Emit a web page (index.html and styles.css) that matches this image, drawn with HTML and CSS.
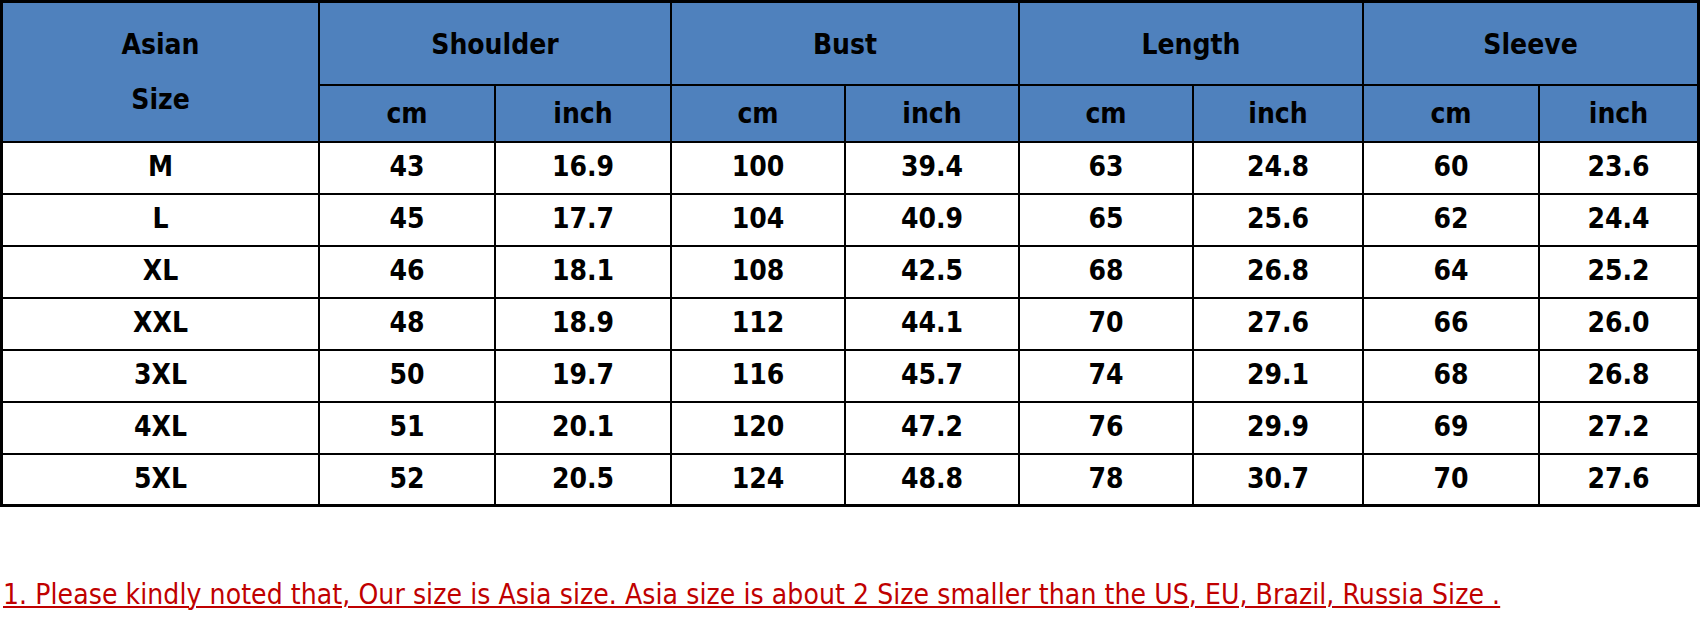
FILE: index.html
```html
<!DOCTYPE html>
<html lang="en">
<head>
<meta charset="utf-8">
<title>Size Chart</title>
<link rel="stylesheet" href="styles.css">
</head>
<body>
<div class="sizes" role="table" aria-label="Size chart">
  <div class="cell head size-head" role="columnheader">Asian<br>Size</div>
  <div class="cell head group" role="columnheader">Shoulder</div>
  <div class="cell head group" role="columnheader">Bust</div>
  <div class="cell head group" role="columnheader">Length</div>
  <div class="cell head group" role="columnheader">Sleeve</div>
  <div class="cell head unit">cm</div><div class="cell head unit">inch</div>
  <div class="cell head unit">cm</div><div class="cell head unit">inch</div>
  <div class="cell head unit">cm</div><div class="cell head unit">inch</div>
  <div class="cell head unit">cm</div><div class="cell head unit">inch</div>

  <div class="cell">M</div><div class="cell">43</div><div class="cell">16.9</div><div class="cell">100</div><div class="cell">39.4</div><div class="cell">63</div><div class="cell">24.8</div><div class="cell">60</div><div class="cell">23.6</div>
  <div class="cell">L</div><div class="cell">45</div><div class="cell">17.7</div><div class="cell">104</div><div class="cell">40.9</div><div class="cell">65</div><div class="cell">25.6</div><div class="cell">62</div><div class="cell">24.4</div>
  <div class="cell">XL</div><div class="cell">46</div><div class="cell">18.1</div><div class="cell">108</div><div class="cell">42.5</div><div class="cell">68</div><div class="cell">26.8</div><div class="cell">64</div><div class="cell">25.2</div>
  <div class="cell">XXL</div><div class="cell">48</div><div class="cell">18.9</div><div class="cell">112</div><div class="cell">44.1</div><div class="cell">70</div><div class="cell">27.6</div><div class="cell">66</div><div class="cell">26.0</div>
  <div class="cell">3XL</div><div class="cell">50</div><div class="cell">19.7</div><div class="cell">116</div><div class="cell">45.7</div><div class="cell">74</div><div class="cell">29.1</div><div class="cell">68</div><div class="cell">26.8</div>
  <div class="cell">4XL</div><div class="cell">51</div><div class="cell">20.1</div><div class="cell">120</div><div class="cell">47.2</div><div class="cell">76</div><div class="cell">29.9</div><div class="cell">69</div><div class="cell">27.2</div>
  <div class="cell">5XL</div><div class="cell">52</div><div class="cell">20.5</div><div class="cell">124</div><div class="cell">48.8</div><div class="cell">78</div><div class="cell">30.7</div><div class="cell">70</div><div class="cell">27.6</div>
</div>
<p class="note">1. Please kindly noted that, Our size is Asia size. Asia size is about 2 Size smaller than the US, EU, Brazil, Russia Size .</p>
</body>
</html>
```

FILE: styles.css
```css
html, body {
  margin: 0;
  padding: 0;
  background: #ffffff;
}

body {
  font-family: "DejaVu Sans Condensed", "DejaVu Sans", sans-serif;
  font-stretch: condensed;
}

.sizes {
  display: grid;
  width: max-content;
  grid-template-columns: 315px 174px 174px 172px 172px 172px 168px 174px 157px;
  grid-template-rows: 81px 55px repeat(6, 50px) 49px;
  gap: 2px;
  padding: 3px;
  background: #000000;
}

.cell {
  display: flex;
  align-items: center;
  justify-content: center;
  padding-bottom: 2px;
  box-sizing: border-box;
  background: #ffffff;
  color: #000000;
  font-size: 28px;
  font-weight: bold;
  line-height: 34px;
  text-align: center;
}

.head {
  background: #4f81bd;
}

.size-head {
  grid-row: 1 / 3;
  line-height: 55px;
  padding-bottom: 0;
}

.group {
  grid-column: span 2;
  padding-bottom: 0;
  padding-top: 2px;
}

.unit {
  padding-bottom: 0;
}

.note {
  margin: 71px 0 0 3px;
  color: #c00000;
  font-size: 28px;
  line-height: 34px;
  letter-spacing: 0.08px;
  text-decoration: underline;
  text-decoration-thickness: 2px;
  text-underline-offset: 2px;
  white-space: nowrap;
}
```
